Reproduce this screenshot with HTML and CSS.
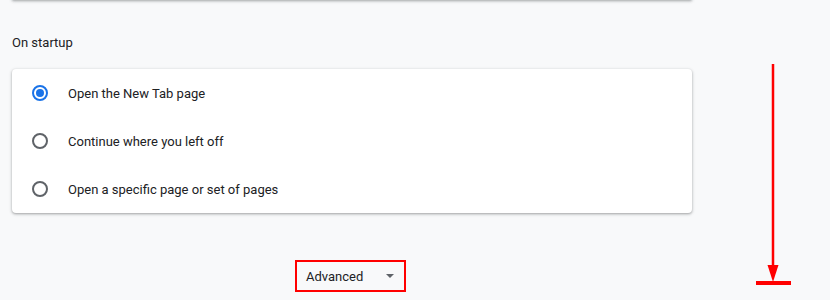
FILE: index.html
```html
<!DOCTYPE html>
<html lang="en">

<head>
  <meta charset="UTF-8">
  <title>Settings</title>
  <link rel="stylesheet" href="styles.css">
</head>

<body>
  <div class="page">
    <div class="card top-card"></div>

    <h2 class="section-title">On startup</h2>

    <div class="card startup-card">
      <label class="radio-row">
        <span class="radio checked"></span>
        <span>Open the New Tab page</span>
      </label>
      <label class="radio-row">
        <span class="radio"></span>
        <span>Continue where you left off</span>
      </label>
      <label class="radio-row">
        <span class="radio"></span>
        <span>Open a specific page or set of pages</span>
      </label>
    </div>

    <div class="advanced-wrap">
      <button class="advanced">
        <span>Advanced</span>
        <span class="caret"></span>
      </button>
    </div>
  </div>

  <!-- annotation arrow -->
  <svg class="note-arrow" width="40" height="230" viewBox="0 0 40 230">
    <line x1="17" y1="0" x2="17" y2="205" stroke="#ff0000" stroke-width="2.5" />
    <polygon points="11.5,201 22.5,201 17,218" fill="#ff0000" />
    <rect x="0" y="217" width="35" height="4" fill="#ff0000" />
  </svg>
</body>

</html>
```

FILE: styles.css
```css
body {
  margin: 0;
  background-color: #f8f9fa;
  font-family: Roboto, "Liberation Sans", Arial, sans-serif;
  color: #202124;
  height: 300px;
  overflow: hidden;
}

.page {
  width: 680px;
  padding-left: 12px;
}

.card {
  background-color: #fff;
  border-radius: 4px;
  box-shadow: 0 1px 2px rgba(60, 64, 67, 0.3), 0 1px 3px 1px rgba(60, 64, 67, 0.15);
}

.top-card {
  height: 2px;
  margin-top: -2px;
  border-radius: 0 0 4px 4px;
}

.section-title {
  font-size: 13px;
  font-weight: 400;
  margin: 0;
  padding-top: 34px;
  height: 35px;
  line-height: 17px;
}

.startup-card {
  padding: 0;
}

.radio-row {
  display: flex;
  align-items: center;
  height: 48px;
  padding-left: 20px;
  font-size: 13px;
}

.radio {
  box-sizing: border-box;
  width: 16px;
  height: 16px;
  border: 2px solid #5f6368;
  border-radius: 50%;
  margin-right: 20px;
  position: relative;
}

.radio.checked {
  border-color: #1a73e8;
}

.radio.checked::after {
  content: "";
  position: absolute;
  left: 2px;
  top: 2px;
  width: 8px;
  height: 8px;
  border-radius: 50%;
  background-color: #1a73e8;
}

.advanced-wrap {
  display: flex;
  justify-content: center;
  padding-top: 47px;
  padding-right: 3px;
}

.advanced {
  box-sizing: border-box;
  display: flex;
  align-items: center;
  justify-content: space-between;
  width: 111px;
  height: 32px;
  padding: 0 10px 0 9px;
  border: 2px solid #ff0000;
  background: transparent;
  font-family: inherit;
  font-size: 13px;
  color: #202124;
}

.caret {
  width: 0;
  height: 0;
  border-left: 4.5px solid transparent;
  border-right: 4.5px solid transparent;
  border-top: 4.5px solid #5f6368;
}

.note-arrow {
  position: absolute;
  left: 756px;
  top: 64px;
}
```
